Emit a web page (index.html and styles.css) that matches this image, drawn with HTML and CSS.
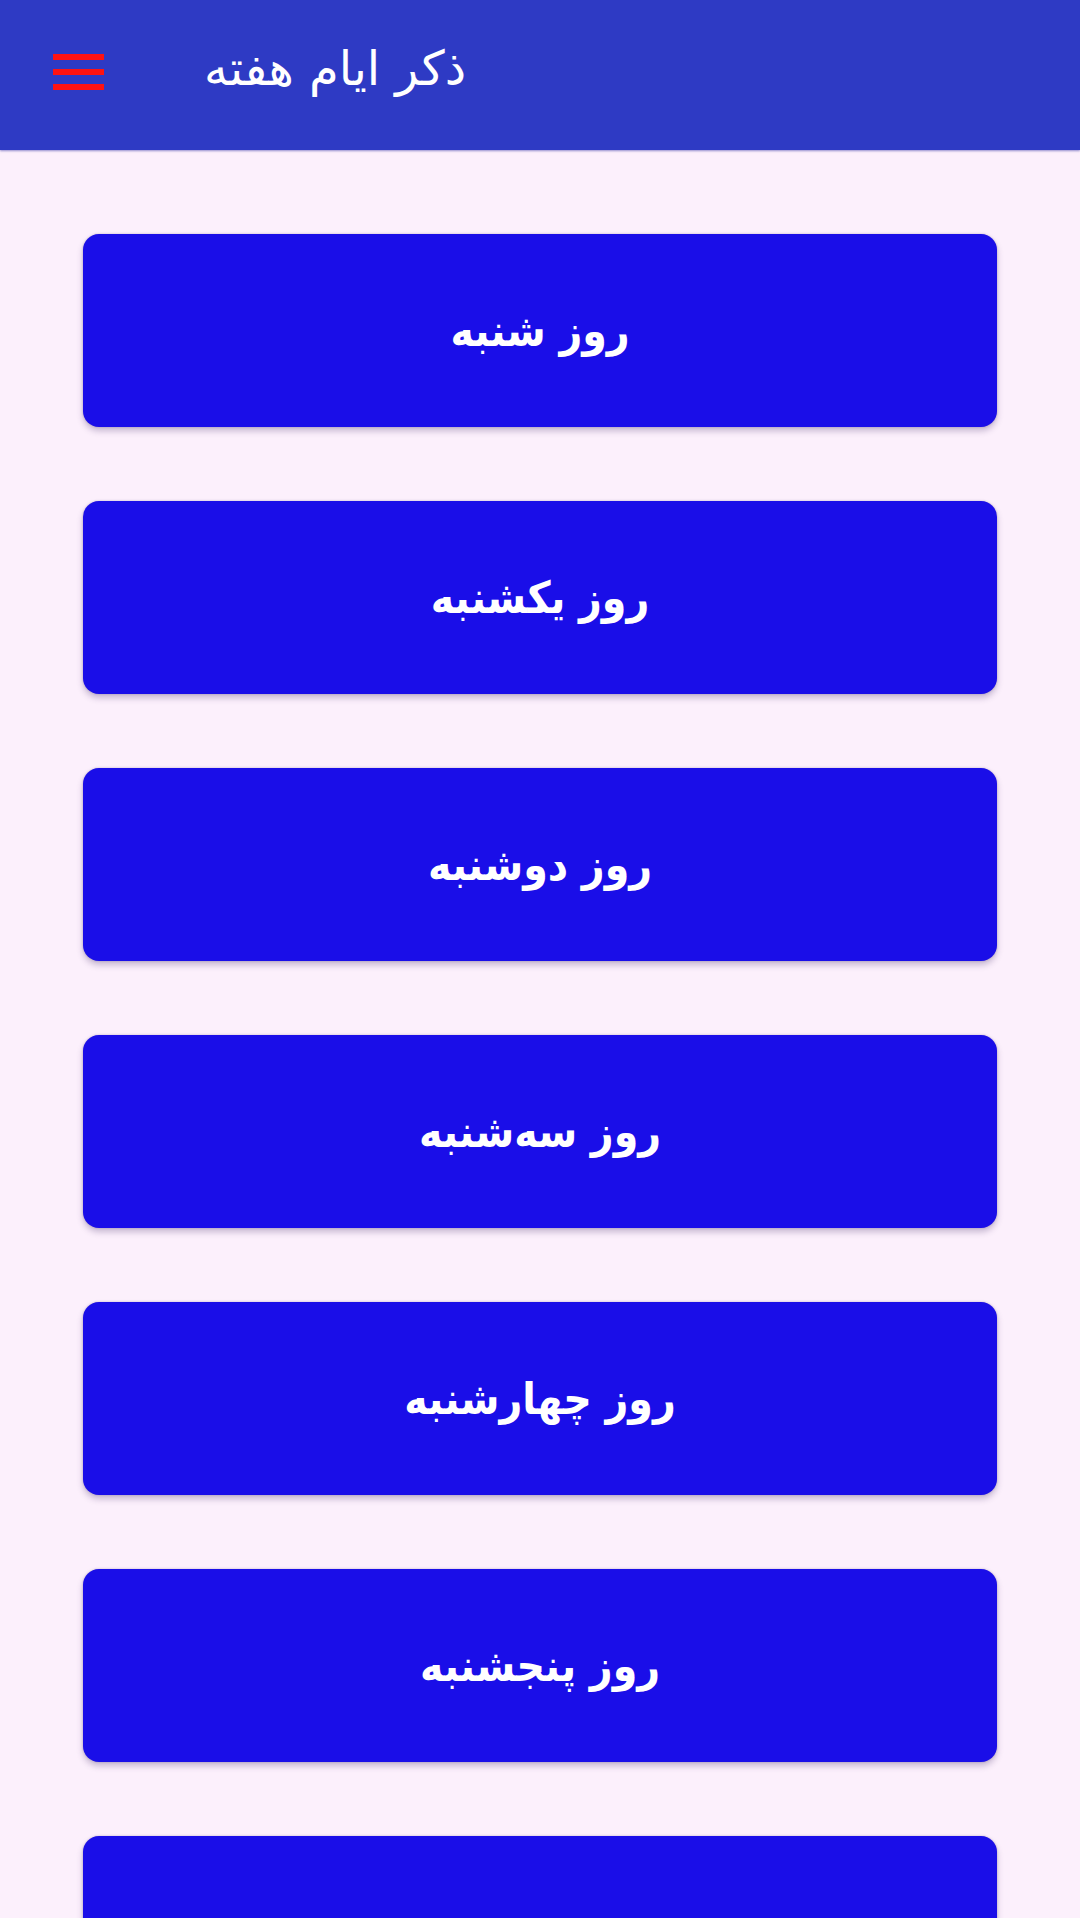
FILE: index.html
```html
<!DOCTYPE html>
<html lang="fa">
<head>
<meta charset="utf-8">
<title>ذکر ایام هفته</title>
<link rel="stylesheet" href="styles.css">
</head>
<body>
<header class="appbar">
  <div class="menu" aria-label="menu">
    <span class="bar"></span>
    <span class="bar"></span>
    <span class="bar"></span>
  </div>
  <h1 class="title" dir="rtl">ذکر ایام هفته</h1>
</header>
<main class="list">
  <button class="day" dir="rtl">روز شنبه</button>
  <button class="day" dir="rtl">روز یکشنبه</button>
  <button class="day" dir="rtl">روز دوشنبه</button>
  <button class="day" dir="rtl">روز سه‌شنبه</button>
  <button class="day" dir="rtl">روز چهارشنبه</button>
  <button class="day" dir="rtl">روز پنجشنبه</button>
  <button class="day" dir="rtl">روز جمعه</button>
</main>
</body>
</html>
```
FILE: styles.css
```css
html, body {
  margin: 0;
  padding: 0;
}
body {
  background: #fcf0fc;
  font-family: "DejaVu Sans", "Noto Sans", sans-serif;
  width: 1080px;
  height: 1918px;
  overflow: hidden;
}
.appbar {
  height: 150px;
  background: #2e3ac4;
  display: flex;
  align-items: center;
  padding-left: 53px;
  box-sizing: border-box;
  box-shadow: 0 1px 2px rgba(40, 40, 160, 0.5);
}
.menu {
  width: 51px;
  display: flex;
  flex-direction: column;
  gap: 9px;
  margin-top: -7px;
}
.bar {
  display: block;
  height: 6px;
  background: #ff1212;
}
.title {
  margin: -14px 0 0 100px;
  color: #ffffff;
  font-weight: normal;
  font-size: 48px;
  line-height: 1;
}
.list {
  display: flex;
  flex-direction: column;
  gap: 74px;
  padding: 84px 83px 0;
}
.day {
  height: 193px;
  flex: none;
  border: none;
  border-radius: 16px;
  background: #1a0ee8;
  color: #ffffff;
  font-family: "DejaVu Sans Condensed", "DejaVu Sans", sans-serif;
  font-weight: bold;
  font-size: 44px;
  box-shadow: 0 4px 6px rgba(60, 40, 100, 0.28), 0 0 2px rgba(60, 40, 100, 0.3);
  padding: 0;
}
```
